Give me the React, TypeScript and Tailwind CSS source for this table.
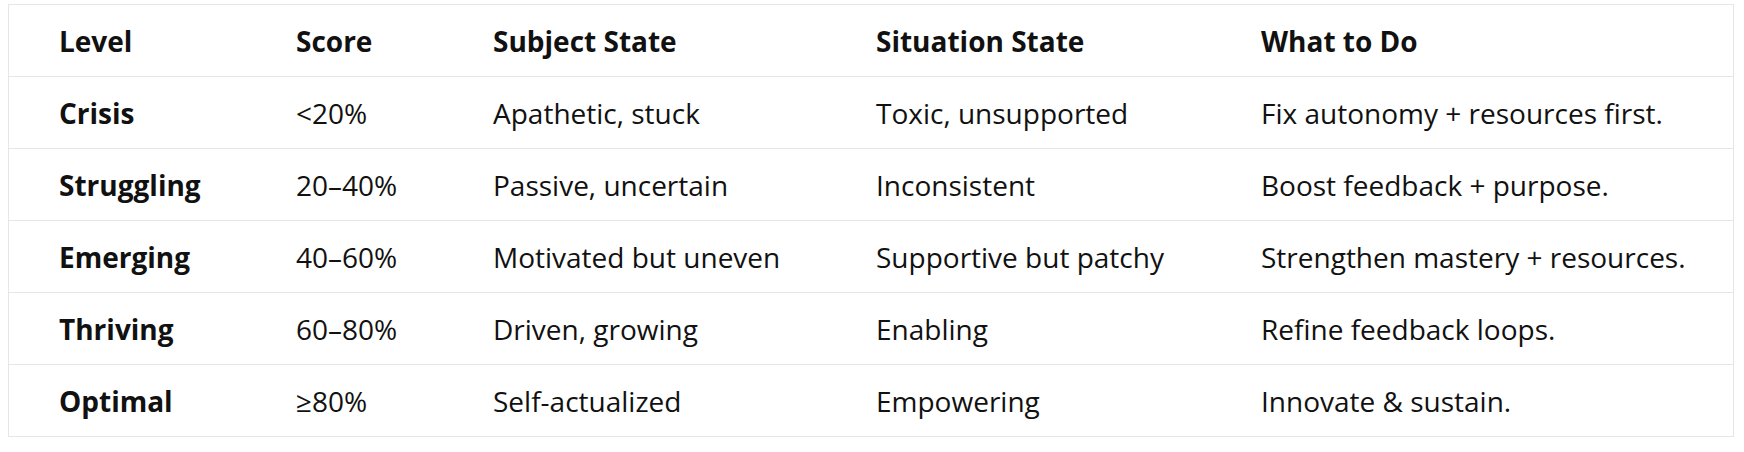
import React from "react";

const rows = [
  ["Crisis", "<20%", "Apathetic, stuck", "Toxic, unsupported", "Fix autonomy + resources first."],
  ["Struggling", "20–40%", "Passive, uncertain", "Inconsistent", "Boost feedback + purpose."],
  ["Emerging", "40–60%", "Motivated but uneven", "Supportive but patchy", "Strengthen mastery + resources."],
  ["Thriving", "60–80%", "Driven, growing", "Enabling", "Refine feedback loops."],
  ["Optimal", "≥80%", "Self-actualized", "Empowering", "Innovate & sustain."],
];

const headers = ["Level", "Score", "Subject State", "Situation State", "What to Do"];

const cols = "grid grid-cols-[237px_197px_383px_385px_1fr]";

export default function App() {
  return (
    <div className="w-[1744px] h-[452px] bg-white pt-[4px] pl-[8px]" style={{ fontFamily: '"Open Sans", "Noto Sans", sans-serif' }}>
      <div className="w-[1726px] border border-[#e6e6e6] text-[#111111] text-[28px]">
        <div className={`${cols} h-[72px] items-center border-b border-[#e6e6e6] font-bold`}>
          {headers.map((h) => (
            <div key={h} className="pl-[50px] leading-[42px] whitespace-nowrap">{h}</div>
          ))}
        </div>
        {rows.map((r, i) => (
          <div key={r[0]} className={`${cols} items-center ${i < rows.length - 1 ? "h-[72px] border-b border-[#e6e6e6]" : "h-[71px]"}`}>
            {r.map((c, j) => (
              <div key={j} className={`pl-[50px] leading-[42px] whitespace-nowrap ${j === 0 ? "font-bold" : ""}`}>{c}</div>
            ))}
          </div>
        ))}
      </div>
    </div>
  );
}
